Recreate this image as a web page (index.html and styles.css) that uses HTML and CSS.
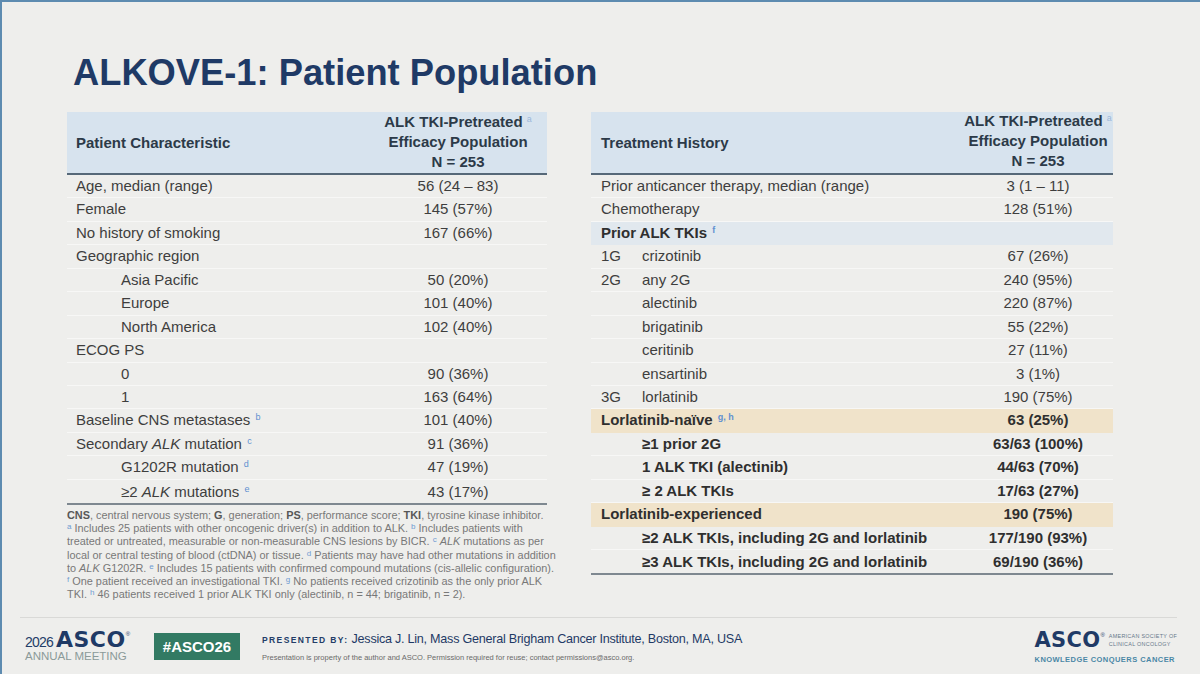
FILE: index.html
```html
<!DOCTYPE html>
<html lang="en">
<head>
<meta charset="utf-8">
<title>ALKOVE-1: Patient Population</title>
<link rel="stylesheet" href="styles.css">
</head>
<body>
<div class="slide">
  <h1 class="title">ALKOVE-1: Patient Population</h1>
  <div class="main">
    <div class="col-left">
      <div class="tbl tbl-left">
        <div class="thead">
          <div class="th-label">Patient Characteristic</div>
          <div class="th-value">
            <div>ALK TKI-Pretreated <span class="hsup">a</span></div>
            <div>Efficacy Population</div>
            <div>N = 253</div>
          </div>
        </div>
        <div class="row"><div class="c-label">Age, median (range)</div><div class="c-val">56 (24 – 83)</div></div>
        <div class="row"><div class="c-label">Female</div><div class="c-val">145 (57%)</div></div>
        <div class="row"><div class="c-label">No history of smoking</div><div class="c-val">167 (66%)</div></div>
        <div class="row"><div class="c-label">Geographic region</div><div class="c-val"></div></div>
        <div class="row ind"><div class="c-label">Asia Pacific</div><div class="c-val">50 (20%)</div></div>
        <div class="row ind"><div class="c-label">Europe</div><div class="c-val">101 (40%)</div></div>
        <div class="row ind"><div class="c-label">North America</div><div class="c-val">102 (40%)</div></div>
        <div class="row"><div class="c-label">ECOG PS</div><div class="c-val"></div></div>
        <div class="row ind"><div class="c-label">0</div><div class="c-val">90 (36%)</div></div>
        <div class="row ind"><div class="c-label">1</div><div class="c-val">163 (64%)</div></div>
        <div class="row"><div class="c-label">Baseline CNS metastases <span class="sup">b</span></div><div class="c-val">101 (40%)</div></div>
        <div class="row"><div class="c-label">Secondary <i>ALK</i> mutation <span class="sup">c</span></div><div class="c-val">91 (36%)</div></div>
        <div class="row ind"><div class="c-label">G1202R mutation <span class="sup">d</span></div><div class="c-val">47 (19%)</div></div>
        <div class="row ind last"><div class="c-label">≥2 <i>ALK</i> mutations <span class="sup">e</span></div><div class="c-val">43 (17%)</div></div>
      </div>
      <div class="notes">
        <b>CNS</b>, central nervous system; <b>G</b>, generation; <b>PS</b>, performance score; <b>TKI</b>, tyrosine kinase inhibitor.<br>
        <span class="nsup">a</span> Includes 25 patients with other oncogenic driver(s) in addition to ALK. <span class="nsup">b</span> Includes patients with<br>
        treated or untreated, measurable or non-measurable CNS lesions by BICR. <span class="nsup">c</span> <i>ALK</i> mutations as per<br>
        local or central testing of blood (ctDNA) or tissue. <span class="nsup">d</span> Patients may have had other mutations in addition<br>
        to <i>ALK</i> G1202R. <span class="nsup">e</span> Includes 15 patients with confirmed compound mutations (cis-allelic configuration).<br>
        <span class="nsup">f</span> One patient received an investigational TKI. <span class="nsup">g</span> No patients received crizotinib as the only prior ALK<br>
        TKI. <span class="nsup">h</span> 46 patients received 1 prior ALK TKI only (alectinib, n = 44; brigatinib, n = 2).
      </div>
    </div>
    <div class="col-right">
      <div class="tbl tbl-right">
        <div class="thead">
          <div class="th-label">Treatment History</div>
          <div class="th-value">
            <div>ALK TKI-Pretreated <span class="hsup">a</span></div>
            <div>Efficacy Population</div>
            <div>N = 253</div>
          </div>
        </div>
        <div class="row"><div class="c-label">Prior anticancer therapy, median (range)</div><div class="c-val">3 (1 – 11)</div></div>
        <div class="row"><div class="c-label">Chemotherapy</div><div class="c-val">128 (51%)</div></div>
        <div class="row band-blue b"><div class="c-label">Prior ALK TKIs <span class="sup">f</span></div><div class="c-val"></div></div>
        <div class="row"><div class="c-label"><span class="gen">1G</span>crizotinib</div><div class="c-val">67 (26%)</div></div>
        <div class="row"><div class="c-label"><span class="gen">2G</span>any 2G</div><div class="c-val">240 (95%)</div></div>
        <div class="row ind"><div class="c-label">alectinib</div><div class="c-val">220 (87%)</div></div>
        <div class="row ind"><div class="c-label">brigatinib</div><div class="c-val">55 (22%)</div></div>
        <div class="row ind"><div class="c-label">ceritinib</div><div class="c-val">27 (11%)</div></div>
        <div class="row ind"><div class="c-label">ensartinib</div><div class="c-val">3 (1%)</div></div>
        <div class="row"><div class="c-label"><span class="gen">3G</span>lorlatinib</div><div class="c-val">190 (75%)</div></div>
        <div class="row band-beige b"><div class="c-label">Lorlatinib-naïve <span class="sup">g, h</span></div><div class="c-val">63 (25%)</div></div>
        <div class="row ind b"><div class="c-label">≥1 prior 2G</div><div class="c-val">63/63 (100%)</div></div>
        <div class="row ind b"><div class="c-label">1 ALK TKI (alectinib)</div><div class="c-val">44/63 (70%)</div></div>
        <div class="row ind b"><div class="c-label">≥ 2 ALK TKIs</div><div class="c-val">17/63 (27%)</div></div>
        <div class="row band-beige b"><div class="c-label">Lorlatinib-experienced</div><div class="c-val">190 (75%)</div></div>
        <div class="row ind b"><div class="c-label">≥2 ALK TKIs, including 2G and lorlatinib</div><div class="c-val">177/190 (93%)</div></div>
        <div class="row ind b last"><div class="c-label">≥3 ALK TKIs, including 2G and lorlatinib</div><div class="c-val">69/190 (36%)</div></div>
      </div>
    </div>
  </div>
  <footer class="footer">
    <div class="meet">
      <div class="meet-top"><span class="year">2026</span><span class="asco-l">ASCO</span><span class="reg">®</span></div>
      <div class="meet-sub">ANNUAL MEETING</div>
    </div>
    <div class="tag">#ASCO26</div>
    <div class="pres">
      <div class="pres-top"><span class="pby">PRESENTED BY:</span><span class="pname">Jessica J. Lin, Mass General Brigham Cancer Institute, Boston, MA, USA</span></div>
      <div class="pnote">Presentation is property of the author and ASCO. Permission required for reuse; contact permissions@asco.org.</div>
    </div>
    <div class="alogo">
      <div class="al-top"><span class="asco-r">ASCO</span><span class="reg r2">®</span><span class="al-soc">AMERICAN SOCIETY OF<br>CLINICAL ONCOLOGY</span></div>
      <div class="kcc">KNOWLEDGE CONQUERS CANCER</div>
    </div>
  </footer>
</div>
</body>
</html>
```
FILE: styles.css
```css
* { box-sizing: border-box; }
html, body { margin: 0; padding: 0; }
body {
  width: 1200px;
  height: 674px;
  overflow: hidden;
  background: #eeeeec;
  font-family: "Liberation Sans", Arial, sans-serif;
}
.slide {
  width: 1200px;
  height: 674px;
  border-top: 2px solid #5d8bb0;
  border-left: 2px solid #5d8bb0;
  display: flex;
  flex-direction: column;
  background: #eeeeec;
}
.title {
  margin: 50px 0 0 71px;
  font-size: 36.3px;
  line-height: 42px;
  font-weight: 700;
  color: #1f3a66;
}
.main {
  flex: 1;
  display: flex;
  align-items: flex-start;
  margin-top: 18px;
  padding-left: 65px;
}
.col-left { width: 480px; }
.col-right { width: 522px; margin-left: 44px; }

.tbl { border-bottom: 2px solid #7e8890; }
.thead {
  display: flex;
  height: 63px;
  background: #d7e3ee;
  border-bottom: 2px solid #566878;
  font-weight: 700;
  font-size: 15px;
  color: #2c3a48;
}
.th-label {
  flex: 1;
  display: flex;
  align-items: center;
  padding-left: 9px;
}
.th-value {
  width: 178px;
  text-align: center;
  line-height: 20px;
  white-space: nowrap;
}
.tbl-right .th-label { padding-left: 10px; }
.tbl-right .th-value { width: 150px; line-height: 20px; margin-top: -1px; }

.row {
  display: flex;
  height: 23.45px;
  line-height: 22.45px;
  font-size: 15px;
  color: #3e3e3e;
  border-bottom: 1px solid rgba(255, 255, 255, 0.55);
  white-space: nowrap;
}
.row.last { border-bottom: none; line-height: 23.45px; }
.c-label { flex: 1; padding-left: 9px; }
.c-val { width: 178px; text-align: center; }
.ind .c-label { padding-left: 54px; }
.tbl-right .c-label { padding-left: 10px; }
.tbl-right .c-val { width: 150px; }
.tbl-right .ind .c-label { padding-left: 51px; }
.gen { display: inline-block; width: 41px; }
.b { font-weight: 700; color: #2f2f2f; }
.band-blue { background: #e1e8ee; border-bottom-color: transparent; }
.band-beige { background: #f0e3ca; border-bottom-color: transparent; }

.sup {
  font-size: 9px;
  line-height: 0;
  vertical-align: 5px;
  color: #5f90d0;
  font-weight: 400;
  margin-left: 1px;
}
.b .sup { font-weight: 700; }
.hsup {
  font-size: 9px;
  line-height: 0;
  vertical-align: 5px;
  color: #9cb8da;
  font-weight: 400;
}

.notes {
  margin-top: 3.5px;
  font-size: 10.9px;
  line-height: 13.3px;
  color: #787878;
  white-space: nowrap;
}
.notes b { color: #575757; }
.nsup {
  font-size: 8px;
  line-height: 0;
  vertical-align: 3px;
  color: #6f9bd2;
}

.footer {
  height: 57px;
  margin: 0 23px 0 18px;
  border-top: 1px solid #d9d9d7;
  display: flex;
  align-items: center;
  padding: 1px 0 0 5px;
}
.meet { width: 104px; }
.meet-top {
  display: flex;
  align-items: baseline;
  height: 19px;
  line-height: 19px;
}
.year {
  font-size: 14px;
  letter-spacing: -0.8px;
  color: #233d68;
  margin-right: 3px;
}
.asco-l {
  font-family: "DejaVu Sans", sans-serif;
  font-weight: 700;
  font-size: 22px;
  letter-spacing: 0.5px;
  color: #1f3a66;
}
.reg {
  font-size: 6px;
  align-self: flex-start;
  line-height: 8px;
  color: #1f3a66;
}
.meet-sub {
  font-size: 11.5px;
  line-height: 13px;
  color: #8b9a99;
  margin-top: 1px;
}
.tag {
  margin-left: 25px;
  width: 86px;
  height: 27px;
  background: #327a63;
  color: #ffffff;
  font-weight: 700;
  font-size: 15px;
  display: flex;
  align-items: center;
  justify-content: center;
}
.pres { margin-left: 22px; }
.pres-top {
  display: flex;
  align-items: baseline;
  line-height: 18px;
}
.pby {
  font-size: 8.5px;
  font-weight: 700;
  letter-spacing: 1.4px;
  color: #233d68;
  margin-right: 3px;
}
.pname {
  font-size: 12.6px;
  letter-spacing: -0.25px;
  color: #1f3a66;
}
.pnote {
  font-size: 7.5px;
  line-height: 10px;
  color: #6a6a6a;
  margin-top: 4px;
}
.alogo {
  margin-left: auto;
  display: flex;
  flex-direction: column;
  align-items: flex-start;
}
.al-top { display: flex; align-items: flex-start; }
.asco-r {
  font-family: "DejaVu Sans", sans-serif;
  font-weight: 700;
  font-size: 21px;
  line-height: 22px;
  letter-spacing: 0.3px;
  color: #1f3a66;
}
.r2 { margin-top: 2px; }
.al-soc {
  font-size: 5.4px;
  line-height: 7.5px;
  letter-spacing: 0.3px;
  color: #66778a;
  margin-left: 4px;
  margin-top: 4px;
}
.kcc {
  font-size: 7.5px;
  font-weight: 700;
  letter-spacing: 0.45px;
  color: #4a87a6;
  margin-top: 4px;
}
```
